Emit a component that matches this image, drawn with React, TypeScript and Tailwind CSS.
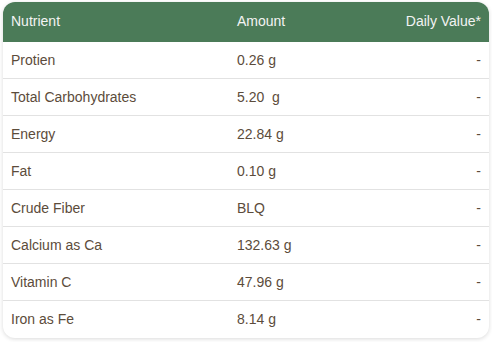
import React from "react";

const rows: [string, string][] = [
  ["Protien", "0.26 g"],
  ["Total Carbohydrates", "5.20  g"],
  ["Energy", "22.84 g"],
  ["Fat", "0.10 g"],
  ["Crude Fiber", "BLQ"],
  ["Calcium as Ca", "132.63 g"],
  ["Vitamin C", "47.96 g"],
  ["Iron as Fe", "8.14 g"],
];

export default function App() {
  return (
    <div className="w-[492px] h-[342px] bg-white pt-[2px] px-[3px]" style={{ fontFamily: '"Liberation Sans", Arial, sans-serif' }}>
      <div className="w-[486px] rounded-[12px] overflow-hidden bg-white shadow-[0_1px_4px_rgba(0,0,0,0.15)]">
        <div className="grid grid-cols-[226px_150px_1fr] h-[40px] items-center bg-[#4b7b58] text-[#f3f3f3] text-[14px]">
          <div className="pl-[8px] pb-[1px]">Nutrient</div>
          <div className="pl-[8px] pb-[1px]">Amount</div>
          <div className="pr-[8px] pb-[1px] text-right">Daily Value*</div>
        </div>
        {rows.map(([n, a], i) => (
          <div
            key={n}
            className={`grid grid-cols-[226px_150px_1fr] h-[37px] items-center text-[14px] text-[#5c4c3b] ${i < rows.length - 1 ? "border-b border-[#e2e2e2]" : ""}`}
          >
            <div className="pl-[8px]">{n}</div>
            <div className="pl-[8px] whitespace-pre">{a}</div>
            <div className="pr-[8px] text-right">-</div>
          </div>
        ))}
      </div>
    </div>
  );
}
